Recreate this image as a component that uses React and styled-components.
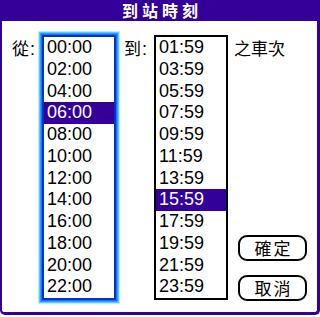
import React from "react";
import styled, { createGlobalStyle } from "styled-components";

const PURPLE = "#330099";
const ROW = 21.75;

const GlobalStyle = createGlobalStyle`
  html, body {
    margin: 0;
    padding: 0;
    background: #ffffff;
  }
  body {
    font-family: "Liberation Sans", "Noto Sans CJK TC", sans-serif;
  }
`;

const Frame = styled.div`
  box-sizing: border-box;
  width: 320px;
  height: 315px;
  border-left: 2px solid ${PURPLE};
  border-right: 3px solid ${PURPLE};
  border-bottom: 3px solid ${PURPLE};
  border-radius: 0 0 5px 5px;
  background: #ffffff;
  display: flex;
  flex-direction: column;
`;

const Title = styled.div`
  height: 21px;
  margin: 0 -3px 0 -2px;
  background: ${PURPLE};
  color: #ffffff;
  font-family: "Noto Sans CJK TC", sans-serif;
  font-weight: 700;
  font-size: 16px;
  line-height: 21px;
  letter-spacing: 4px;
  padding-left: 4px;
  text-align: center;
  white-space: nowrap;
`;

const Body = styled.div`
  display: flex;
  padding: 14px 0 0 10px;
`;

const Label = styled.div`
  width: ${(p) => p.$width}px;
  margin-left: ${(p) => p.$gap || 0}px;
  padding-top: 2px;
  font-family: "Noto Sans CJK TC", sans-serif;
  font-size: 17px;
  line-height: ${ROW}px;
  color: #000000;
  white-space: nowrap;
`;

const Colon = styled.span`
  font-family: "Liberation Sans", sans-serif;
  font-size: 18px;
  margin-left: 1px;
`;

const ListBox = styled.ul`
  box-sizing: border-box;
  width: 74px;
  height: 265px;
  margin: 0;
  padding: 0;
  list-style: none;
  background: #ffffff;
  border: 2px solid ${(p) => (p.$focused ? "#0033cc" : "#000000")};
  box-shadow: ${(p) =>
    p.$focused
      ? "0 0 0 1px #1f6fff, 0 0 0 2px #3399ff, 0 0 0 3px #55ccff, 0 0 0 4px #bbeeff"
      : "none"};
`;

const Item = styled.li`
  height: ${ROW}px;
  line-height: ${ROW}px;
  padding-left: 3px;
  font-family: "Liberation Sans", sans-serif;
  font-size: 18px;
  color: ${(p) => (p.$selected ? "#ffffff" : "#000000")};
  background: ${(p) => (p.$selected ? PURPLE : "transparent")};
`;

const Side = styled.div`
  margin-left: 6px;
  height: 265px;
  display: flex;
  flex-direction: column;
  justify-content: space-between;
`;

const Buttons = styled.div`
  display: flex;
  flex-direction: column;
  gap: 14px;
  margin-left: 4px;
  margin-bottom: -1px;
`;

const Button = styled.button`
  box-sizing: border-box;
  width: 69px;
  height: 26px;
  padding: 0 0 0 2px;
  border: 2px solid #000000;
  border-radius: 9px;
  background: #ffffff;
  color: #000000;
  font-family: "Noto Sans CJK TC", sans-serif;
  font-size: 17px;
  line-height: 20px;
  letter-spacing: 2px;
`;

const fromTimes = ["00:00", "02:00", "04:00", "06:00", "08:00", "10:00", "12:00", "14:00", "16:00", "18:00", "20:00", "22:00"];
const toTimes = ["01:59", "03:59", "05:59", "07:59", "09:59", "11:59", "13:59", "15:59", "17:59", "19:59", "21:59", "23:59"];

const TimeList = ({ times, selected, focused }) => (
  <ListBox $focused={focused}>
    {times.map((t) => (
      <Item key={t} $selected={t === selected}>
        {t}
      </Item>
    ))}
  </ListBox>
);

export default function App() {
  return (
    <>
      <GlobalStyle />
      <Frame>
        <Title>到站時刻</Title>
        <Body>
          <Label $width={30}>
            從<Colon>:</Colon>
          </Label>
          <TimeList times={fromTimes} selected="06:00" focused />
          <Label $width={30} $gap={8}>
            到<Colon>:</Colon>
          </Label>
          <TimeList times={toTimes} selected="15:59" />
          <Side>
            <Label>之車次</Label>
            <Buttons>
              <Button>確定</Button>
              <Button>取消</Button>
            </Buttons>
          </Side>
        </Body>
      </Frame>
    </>
  );
}
